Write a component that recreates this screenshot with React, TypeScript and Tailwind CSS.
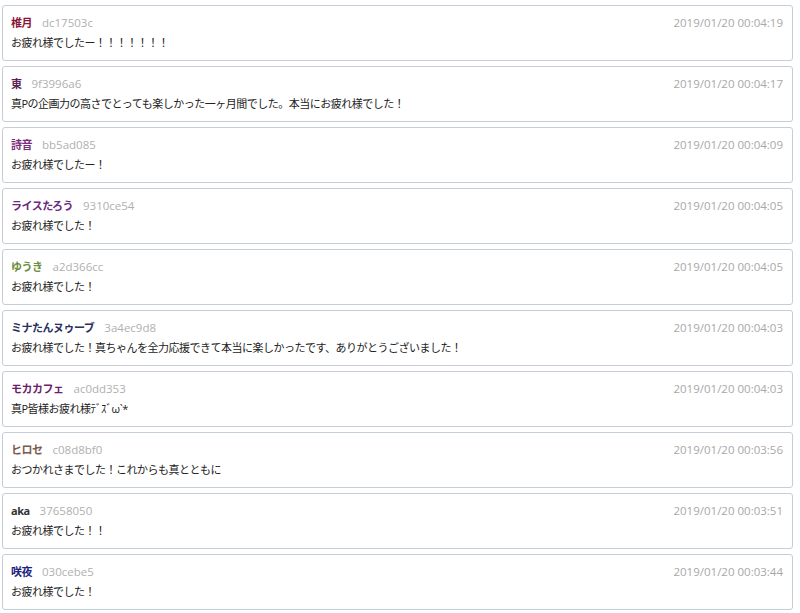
const comments = [
  { name: '椎月', color: 'text-[#8a1538]', id: 'dc17503c', time: '2019/01/20 00:04:19', body: 'お疲れ様でしたー！！！！！！！' },
  { name: '東', color: 'text-[#5a2458]', id: '9f3996a6', time: '2019/01/20 00:04:17', body: '真Pの企画力の高さでとっても楽しかった一ヶ月間でした。本当にお疲れ様でした！' },
  { name: '詩音', color: 'text-[#7a2f7a]', id: 'bb5ad085', time: '2019/01/20 00:04:09', body: 'お疲れ様でしたー！' },
  { name: 'ライスたろう', color: 'text-[#6a2a80]', id: '9310ce54', time: '2019/01/20 00:04:05', body: 'お疲れ様でした！' },
  { name: 'ゆうき', color: 'text-[#6b8e3b]', id: 'a2d366cc', time: '2019/01/20 00:04:05', body: 'お疲れ様でした！' },
  { name: 'ミナたんヌゥーブ', color: 'text-[#2b2f5f]', id: '3a4ec9d8', time: '2019/01/20 00:04:03', body: 'お疲れ様でした！真ちゃんを全力応援できて本当に楽しかったです、ありがとうございました！' },
  { name: 'モカカフェ', color: 'text-[#6b1f6b]', id: 'ac0dd353', time: '2019/01/20 00:04:03', body: '真P皆様お疲れ様ﾃﾞｽﾞω`*' },
  { name: 'ヒロセ', color: 'text-[#7a5c4f]', id: 'c08d8bf0', time: '2019/01/20 00:03:56', body: 'おつかれさまでした！これからも真とともに' },
  { name: 'aka', color: 'text-[#333333]', id: '37658050', time: '2019/01/20 00:03:51', body: 'お疲れ様でした！！' },
  { name: '咲夜', color: 'text-[#1a237e]', id: '030cebe5', time: '2019/01/20 00:03:44', body: 'お疲れ様でした！' },
];

const App = () => {
  return (
    <div className="bg-white min-h-[613px] pt-[5px] pl-[2px] pr-[7px] font-['Open_Sans','Noto_Sans_CJK_JP',sans-serif] text-[11px]">
      <div className="flex flex-col gap-[5px]">
        {comments.map((c) => (
          <div key={c.id} className="border border-[#c5ced6] rounded-[3px] px-[8px] pt-[9px] pb-[9px] h-[56px]">
            <div className="flex items-center h-[16px] leading-[16px]">
              <span className={`font-bold tracking-[-0.5px] ${c.color}`}>{c.name}</span>
              <span className="ml-[10px] text-[11.5px] text-[#b0b0b0]">{c.id}</span>
              <span className="ml-auto pr-[1px] text-[11.5px] text-[#a8a8a8]">{c.time}</span>
            </div>
            <div className="mt-[4px] h-[16px] leading-[16px] tracking-[-0.5px] text-[#222222]">{c.body}</div>
          </div>
        ))}
      </div>
    </div>
  );
};

export default App;
